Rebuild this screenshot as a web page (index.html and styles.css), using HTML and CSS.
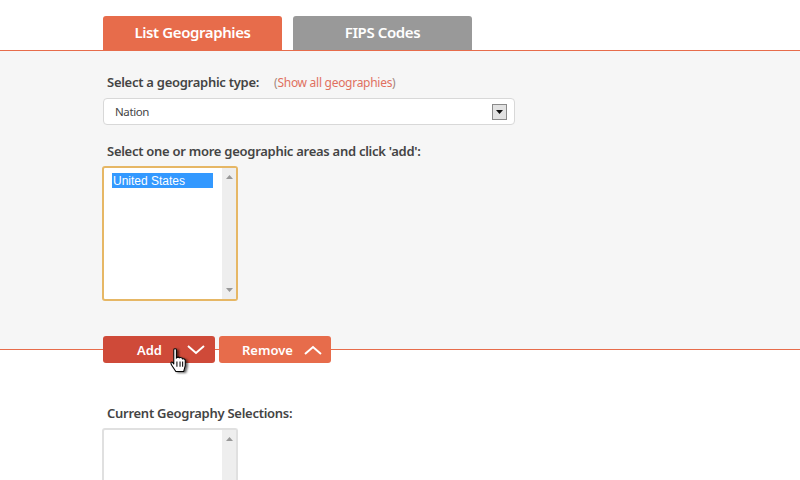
FILE: index.html
```html
<!DOCTYPE html>
<html lang="en">
<head>
<meta charset="utf-8">
<title>Geographies</title>
<link rel="stylesheet" href="styles.css">
</head>
<body>
<nav class="tabs">
  <div class="tab tab-active">List Geographies</div>
  <div class="tab tab-muted">FIPS Codes</div>
</nav>
<section class="panel">
  <div class="label-row">
    <span class="label">Select a geographic type:</span>
    <span class="show-all">(<span class="show-link">Show all geographies</span>)</span>
  </div>
  <div class="select">
    <span>Nation</span>
    <span class="select-btn"><svg width="7" height="4" viewBox="0 0 7 4"><path d="M0 0h7L3.500 4z" fill="#111"/></svg></span>
  </div>
  <div class="label label-areas">Select one or more geographic areas and click 'add':</div>
  <div class="listbox listbox-focus">
    <div class="list-items"><div class="list-item">United States</div></div>
    <div class="scroll">
      <svg width="7" height="4" viewBox="0 0 7 4"><path d="M3.500 0L7 4H0z" fill="#999"/></svg>
      <svg width="7" height="4" viewBox="0 0 7 4"><path d="M0 0h7L3.500 4z" fill="#999"/></svg>
    </div>
  </div>
</section>
<div class="actions">
  <div class="btn btn-add">
    <span>Add</span>
    <svg width="18" height="10" viewBox="0 0 18 10"><path d="M1 1l8 7 8-7" fill="none" stroke="#fff" stroke-width="2"/></svg>
  </div>
  <div class="btn btn-remove">
    <span>Remove</span>
    <svg width="18" height="10" viewBox="0 0 18 10"><path d="M1 9l8-7 8 7" fill="none" stroke="#fff" stroke-width="2"/></svg>
  </div>
  <svg class="cursor" width="18" height="25" viewBox="0 0 17 24">
    <path d="M3.500 1.500C3.500.500 6 .500 6 1.500V9.500C7 8.500 8.500 8.500 9 9.500 10 9 11.500 9 12 10.500 13 10 14.500 10.500 14.500 12V17L13 22.500H5.500L1.500 16.500C.500 15 .500 13.500 1.500 13.500 2.500 13.500 3 14.500 3.500 15.500z" fill="#fff" stroke="#000" stroke-width="1"/>
    <path d="M6.500 13v5M9.500 13v5M12 13v5" stroke="#000" stroke-width="1"/>
  </svg>
</div>
<section class="current">
  <div class="label">Current Geography Selections:</div>
  <div class="listbox listbox-plain">
    <div class="list-items"></div>
    <div class="scroll">
      <svg width="7" height="4" viewBox="0 0 7 4"><path d="M3.500 0L7 4H0z" fill="#999"/></svg>
    </div>
  </div>
</section>
</body>
</html>
```
FILE: styles.css
```css
html, body {
  margin: 0;
  height: 480px;
  overflow: hidden;
  background: #fff;
  font-family: "Noto Sans", "Open Sans", sans-serif;
  color: #3d3d3d;
}
.tabs {
  display: flex;
  gap: 11px;
  padding: 16px 0 0 103px;
  height: 34px;
}
.tab {
  width: 179px;
  height: 34px;
  border-radius: 3px 3px 0 0;
  color: #fff;
  font-size: 15px;
  font-weight: 600;
  letter-spacing: -0.4px;
  text-align: center;
  line-height: 33px;
}
.tab-active { background: #e76c4b; }
.tab-muted { background: #999; }
.panel {
  box-sizing: border-box;
  height: 300px;
  background: #f6f6f6;
  border-top: 1px solid #e76c4b;
  border-bottom: 1px solid #e76c4b;
  padding: 0 0 0 103px;
}
.label-row {
  display: flex;
  align-items: center;
  height: 20px;
  margin: 21px 0 0 3px;
}
.label {
  font-size: 13px;
  font-weight: 600;
  letter-spacing: -0.27px;
  color: #444;
  line-height: 20px;
}
.label-row .label {
  margin-left: 1px;
}
.show-all {
  margin-left: 15px;
  font-size: 12px;
  letter-spacing: -0.28px;
  color: #a0887f;
}
.show-link { color: #e0705f; }
.select {
  box-sizing: border-box;
  width: 412px;
  height: 27px;
  margin-top: 6px;
  border: 1px solid #d8d8d8;
  border-radius: 4px;
  background: #fff;
  display: flex;
  align-items: center;
  justify-content: space-between;
  padding: 0 7px 0 11px;
  font-size: 11.500px;
  letter-spacing: -0.4px;
  color: #444;
}
.select-btn {
  box-sizing: border-box;
  width: 15px;
  height: 16px;
  border: 1px solid #8a8a8a;
  background: #e2e2e2;
  display: flex;
  align-items: center;
  justify-content: center;
}
.label-areas {
  margin: 16px 0 0 4px;
  height: 20px;
}
.listbox {
  box-sizing: border-box;
  width: 136px;
  margin-left: -1px;
  background: #fff;
  border-radius: 3px;
  display: flex;
}
.listbox-focus {
  height: 135px;
  margin-top: 5px;
  border: 2px solid #e6b765;
}
.listbox-plain {
  height: 70px;
  margin-top: 5px;
  border: 2px solid #e0e0e0;
  border-bottom: 0;
}
.list-items {
  flex: 1;
  padding: 5px 0 0 8px;
}
.list-item {
  box-sizing: border-box;
  width: 101px;
  height: 15px;
  background: #3399ff;
  color: #fff;
  font: 12px/16px "Liberation Sans", Arial, sans-serif;
  padding-left: 1px;
}
.scroll {
  width: 14px;
  background: #eeeeee;
  display: flex;
  flex-direction: column;
  align-items: center;
  justify-content: space-between;
  padding: 7px 0;
  box-sizing: border-box;
}
.actions {
  position: relative;
  display: flex;
  gap: 4px;
  margin: -14px 0 0 103px;
}
.btn {
  box-sizing: border-box;
  height: 27px;
  border-radius: 3px;
  color: #fff;
  font-size: 13px;
  font-weight: 600;
  display: flex;
  align-items: center;
  justify-content: space-between;
}
.btn-add {
  width: 112px;
  background: #cf4a39;
  padding: 0 10px 0 34px;
}
.btn-remove {
  width: 112px;
  background: #e76c4b;
  padding: 0 9px 0 23px;
}
.cursor {
  position: absolute;
  left: 67px;
  top: 12px;
  filter: drop-shadow(2px 1px 1px rgba(0, 0, 0, 0.6));
}
.current {
  margin: 40px 0 0 103px;
}
.current .label {
  margin-left: 4px;
}
```
